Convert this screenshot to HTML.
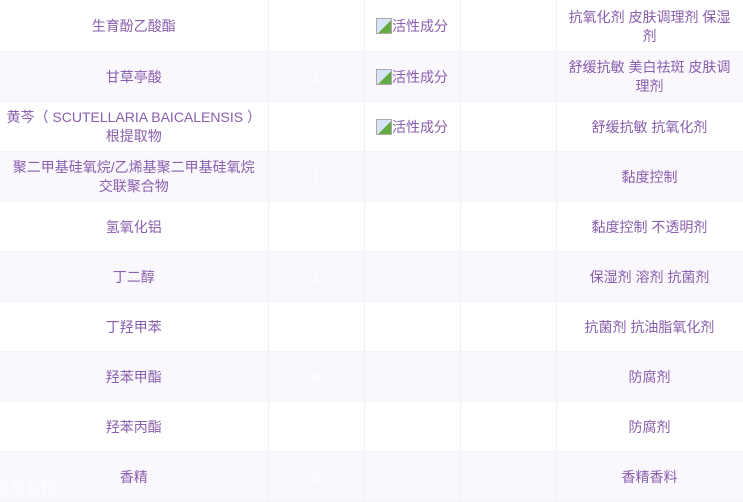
<!DOCTYPE html>
<html><head><meta charset="utf-8"><style>
body{margin:0;width:743px;height:498px;overflow:hidden;background:#fff;font-family:"Liberation Sans","Noto Sans CJK SC",sans-serif;}
table{border-collapse:collapse;table-layout:fixed;width:743px;position:absolute;top:1px;left:0}
td{height:50px;padding:2px 12px 0;box-sizing:border-box;text-align:center;vertical-align:middle;font-size:14px;line-height:19px;color:#8a5eae;border-right:1px solid #f1eff4;border-bottom:1px solid #f6f4f8}
td.c{padding:2px 4px 0;white-space:nowrap}
td.w{padding:2px 4px 0;white-space:nowrap}
tr:nth-child(even) td{background:#faf8fd}
td.n{color:#fff}
.img{display:inline-block;width:16px;height:16px;border:1px solid #aaa;background:linear-gradient(135deg,#d6e4f5 55%,#6a4 55%);vertical-align:-3px;box-sizing:border-box}
.wm{position:absolute;left:0;top:475px;color:#fff;font-size:16px;opacity:.8}
</style></head><body>
<table>
<colgroup><col style="width:268px"><col style="width:96px"><col style="width:96px"><col style="width:96px"><col style="width:187px"></colgroup>
<tr><td>生育酚乙酸酯</td><td class="n"></td><td class="c"><span class="img"></span>活性成分</td><td></td><td class="w">抗氧化剂 皮肤调理剂 保湿<br>剂</td></tr>
<tr><td>甘草亭酸</td><td class="n">1</td><td class="c"><span class="img"></span>活性成分</td><td></td><td class="w">舒缓抗敏 美白祛斑 皮肤调<br>理剂</td></tr>
<tr><td class="w">黄芩（ SCUTELLARIA BAICALENSIS ）<br>根提取物</td><td class="n"></td><td class="c"><span class="img"></span>活性成分</td><td></td><td>舒缓抗敏 抗氧化剂</td></tr>
<tr><td>聚二甲基硅氧烷/乙烯基聚二甲基硅氧烷交联聚合物</td><td class="n">1</td><td></td><td></td><td>黏度控制</td></tr>
<tr><td>氢氧化铝</td><td class="n"></td><td></td><td></td><td>黏度控制 不透明剂</td></tr>
<tr><td>丁二醇</td><td class="n">1</td><td></td><td></td><td>保湿剂 溶剂 抗菌剂</td></tr>
<tr><td>丁羟甲苯</td><td class="n"></td><td></td><td></td><td>抗菌剂 抗油脂氧化剂</td></tr>
<tr><td>羟苯甲酯</td><td class="n">4</td><td></td><td></td><td>防腐剂</td></tr>
<tr><td>羟苯丙酯</td><td class="n"></td><td></td><td></td><td>防腐剂</td></tr>
<tr><td>香精</td><td class="n">8</td><td></td><td></td><td>香精香料</td></tr>
</table>
<div class="wm">5号女性</div>
</body></html>
